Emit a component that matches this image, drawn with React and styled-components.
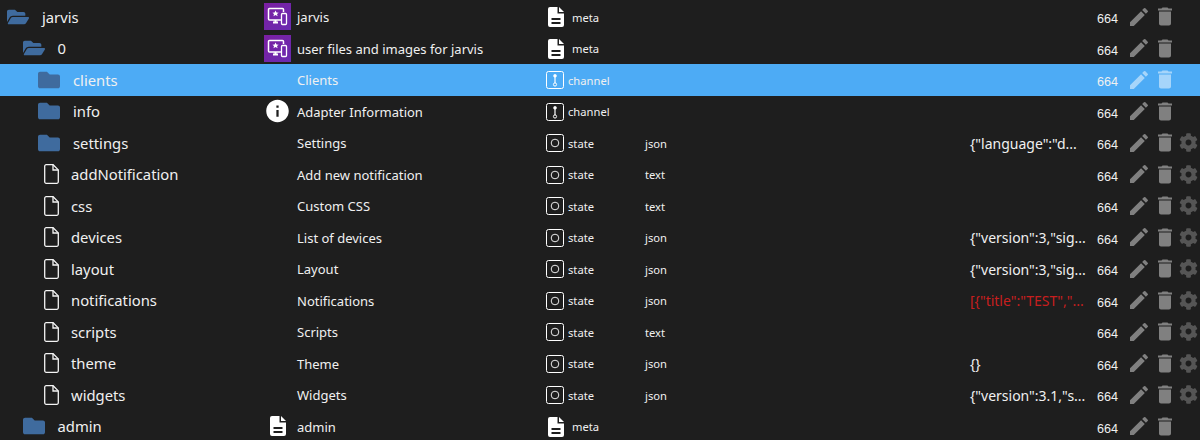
import React from "react";
import styled, { createGlobalStyle } from "styled-components";
import { FaFolder, FaFolderOpen, FaCog } from "react-icons/fa";
import { MdEdit, MdDelete, MdInfo } from "react-icons/md";

const GlobalStyle = createGlobalStyle`
  html, body {
    margin: 0;
    background: #1e1e1e;
    overflow: hidden;
  }
  body {
    font-family: "Noto Sans", "Open Sans", sans-serif;
    color: #f0f0f0;
  }
`;

const Table = styled.div`
  padding-top: 1px;
  width: 1200px;
  height: 440px;
  overflow: hidden;
`;

const Row = styled.div`
  display: grid;
  grid-template-columns: 264px 282px 99px 325px 127px 28px 28px 24px 23px;
  align-items: center;
  height: 31.5px;
  background: ${(p) => (p.$selected ? "#4dabf5" : "transparent")};
`;

const NameCell = styled.div`
  display: flex;
  align-items: center;
  padding-left: ${(p) => p.$indent}px;
  font-size: 14.8px;
  white-space: nowrap;
`;

const TreeIcon = styled.span`
  display: flex;
  justify-content: center;
  width: ${(p) => (p.$file ? 18 : 26)}px;
  margin-right: 11px;
  color: #3f6b9e;
  font-size: 22px;
`;

const TitleCell = styled.div`
  display: flex;
  align-items: center;
  padding-top: 1px;
  font-size: 13px;
  white-space: nowrap;
`;

const AppTile = styled.span`
  display: flex;
  align-items: center;
  justify-content: center;
  width: 27px;
  height: 27px;
  margin-top: -1px;
  margin-right: 6px;
  background: linear-gradient(135deg, #7b1fa2, #6a2bb0);
`;

const IconSlot = styled.span`
  display: flex;
  align-items: center;
  justify-content: center;
  width: 27px;
  height: 27px;
  margin-top: -1px;
  margin-right: 6px;
  font-size: 28px;
  color: #fff;
`;

const TypeCell = styled.div`
  display: flex;
  align-items: center;
  padding-top: 1px;
  padding-left: ${(p) => (p.$meta ? 2 : 0)}px;
  font-size: 11.2px;
  gap: ${(p) => (p.$meta ? 8 : 4)}px;
`;

const RoleCell = styled.div`
  padding-top: 1px;
  font-size: 11.2px;
`;

const ValueCell = styled.div`
  padding-top: 1px;
  font-size: 14px;
  white-space: nowrap;
  color: ${(p) => (p.$error ? "#c81e1e" : "inherit")};
`;

const Rights = styled.div`
  font-family: "Liberation Sans", Arial, sans-serif;
  font-size: 12.6px;
  padding-top: 5px;
`;

const Action = styled.span`
  display: flex;
  align-items: center;
  justify-content: center;
  font-size: ${(p) => p.$size}px;
  color: ${(p) => (p.$dim ? "#555" : p.$selected ? "#a6d5fa" : "#808080")};
`;

function AppIcon() {
  return (
    <svg width="21" height="19" viewBox="0 0 21 19" fill="none">
      <path d="M14 13H2.5a1 1 0 0 1-1-1V2.5a1 1 0 0 1 1-1h13a1 1 0 0 1 1 1V5" stroke="#fff" strokeWidth="1.5" />
      <path d="M6 15.5h5M8.5 13v2.5" stroke="#fff" strokeWidth="2" />
      <path d="M8.5 3.4l1 2.1 2.2.2-1.7 1.4.6 2.2-2.1-1.2-2 1.2.5-2.2L5.4 5.7l2.2-.2z" fill="#fff" />
      <rect x="14.5" y="6.5" width="5" height="11" rx="1" stroke="#fff" strokeWidth="1.3" />
    </svg>
  );
}

function ChannelIcon() {
  return (
    <svg width="18" height="18" viewBox="0 0 18 18" fill="none" stroke="#fff">
      <rect x="0.5" y="0.5" width="17" height="17" rx="2" strokeWidth="1" />
      <path d="M9 5v7" strokeWidth="1.2" />
      <circle cx="9" cy="4.8" r="1.5" fill="#fff" strokeWidth="0.5" />
      <circle cx="9" cy="13.5" r="1.6" strokeWidth="1" />
    </svg>
  );
}

function StateIcon() {
  return (
    <svg width="18" height="18" viewBox="0 0 18 18" fill="none" stroke="#fff">
      <rect x="0.5" y="0.5" width="17" height="17" rx="2" strokeWidth="1" />
      <circle cx="9" cy="9" r="3.8" strokeWidth="0.9" />
    </svg>
  );
}

function DocIcon() {
  return (
    <svg width="16" height="20" viewBox="0 0 16 20">
      <path d="M2 0h7.5v6.5H16V18a2 2 0 0 1-2 2H2a2 2 0 0 1-2-2V2a2 2 0 0 1 2-2z" fill="#fff" />
      <path d="M11 0l5 5h-5z" fill="#fff" />
      <path d="M3.5 11h9v2h-9zM3.5 15h9v2h-9z" fill="#1e1e1e" />
    </svg>
  );
}

function FileIcon() {
  return (
    <svg width="15" height="20" viewBox="0 0 15 20" fill="none" stroke="#f4f4f4" strokeWidth="1.3">
      <path d="M2.2.7h6.9l5.2 5.2v11.900a1.500 1.500 0 0 1-1.500 1.500H2.200a1.500 1.500 0 0 1-1.500-1.500V2.200A1.500 1.500 0 0 1 2.200.7z" />
      <path d="M9 .7v5.300h5.300" />
    </svg>
  );
}

const rows = [
  { name: "jarvis", level: 0, open: true, tile: true, title: "jarvis", type: "meta" },
  { name: "0", level: 1, open: true, tile: true, title: "user files and images for jarvis", type: "meta" },
  { name: "clients", level: 2, title: "Clients", type: "channel", selected: true },
  { name: "info", level: 2, info: true, title: "Adapter Information", type: "channel" },
  { name: "settings", level: 2, title: "Settings", type: "state", role: "json", value: '{"language":"d...', gear: true },
  { name: "addNotification", file: true, title: "Add new notification", type: "state", role: "text", gear: true },
  { name: "css", file: true, title: "Custom CSS", type: "state", role: "text", gear: true },
  { name: "devices", file: true, title: "List of devices", type: "state", role: "json", value: '{"version":3,"sig...', gear: true },
  { name: "layout", file: true, title: "Layout", type: "state", role: "json", value: '{"version":3,"sig...', gear: true },
  { name: "notifications", file: true, title: "Notifications", type: "state", role: "json", value: '[{"title":"TEST","...', error: true, gear: true },
  { name: "scripts", file: true, title: "Scripts", type: "state", role: "text", gear: true },
  { name: "theme", file: true, title: "Theme", type: "state", role: "json", value: "{}", gear: true },
  { name: "widgets", file: true, title: "Widgets", type: "state", role: "json", value: '{"version":3.1,"s...', gear: true },
  { name: "admin", level: 1, doc: true, title: "admin", type: "meta" },
];

function TitleIcon({ row }) {
  if (row.tile) return <AppTile><AppIcon /></AppTile>;
  if (row.info) return <IconSlot><MdInfo /></IconSlot>;
  if (row.doc) return <IconSlot><DocIcon /></IconSlot>;
  return <IconSlot />;
}

function TypeIcon({ type }) {
  if (type === "channel") return <ChannelIcon />;
  if (type === "state") return <StateIcon />;
  return <DocIcon />;
}

export default function App() {
  return (
    <>
      <GlobalStyle />
      <Table>
        {rows.map((row) => (
          <Row key={row.name} $selected={row.selected}>
            <NameCell $indent={row.file ? 42 : 5 + (row.level || 0) * 15.5}>
              <TreeIcon $file={row.file}>
                {row.file ? <FileIcon /> : row.open ? <FaFolderOpen /> : <FaFolder />}
              </TreeIcon>
              {row.name}
            </NameCell>
            <TitleCell>
              <TitleIcon row={row} />
              {row.title}
            </TitleCell>
            <TypeCell $meta={row.type === "meta"}>
              <TypeIcon type={row.type} />
              {row.type}
            </TypeCell>
            <RoleCell>{row.role}</RoleCell>
            <ValueCell $error={row.error}>{row.value}</ValueCell>
            <Rights>664</Rights>
            <Action $size={24} $selected={row.selected}><MdEdit /></Action>
            <Action $size={25} $selected={row.selected}><MdDelete /></Action>
            <Action $size={19} $dim>{row.gear && <FaCog />}</Action>
          </Row>
        ))}
      </Table>
    </>
  );
}
